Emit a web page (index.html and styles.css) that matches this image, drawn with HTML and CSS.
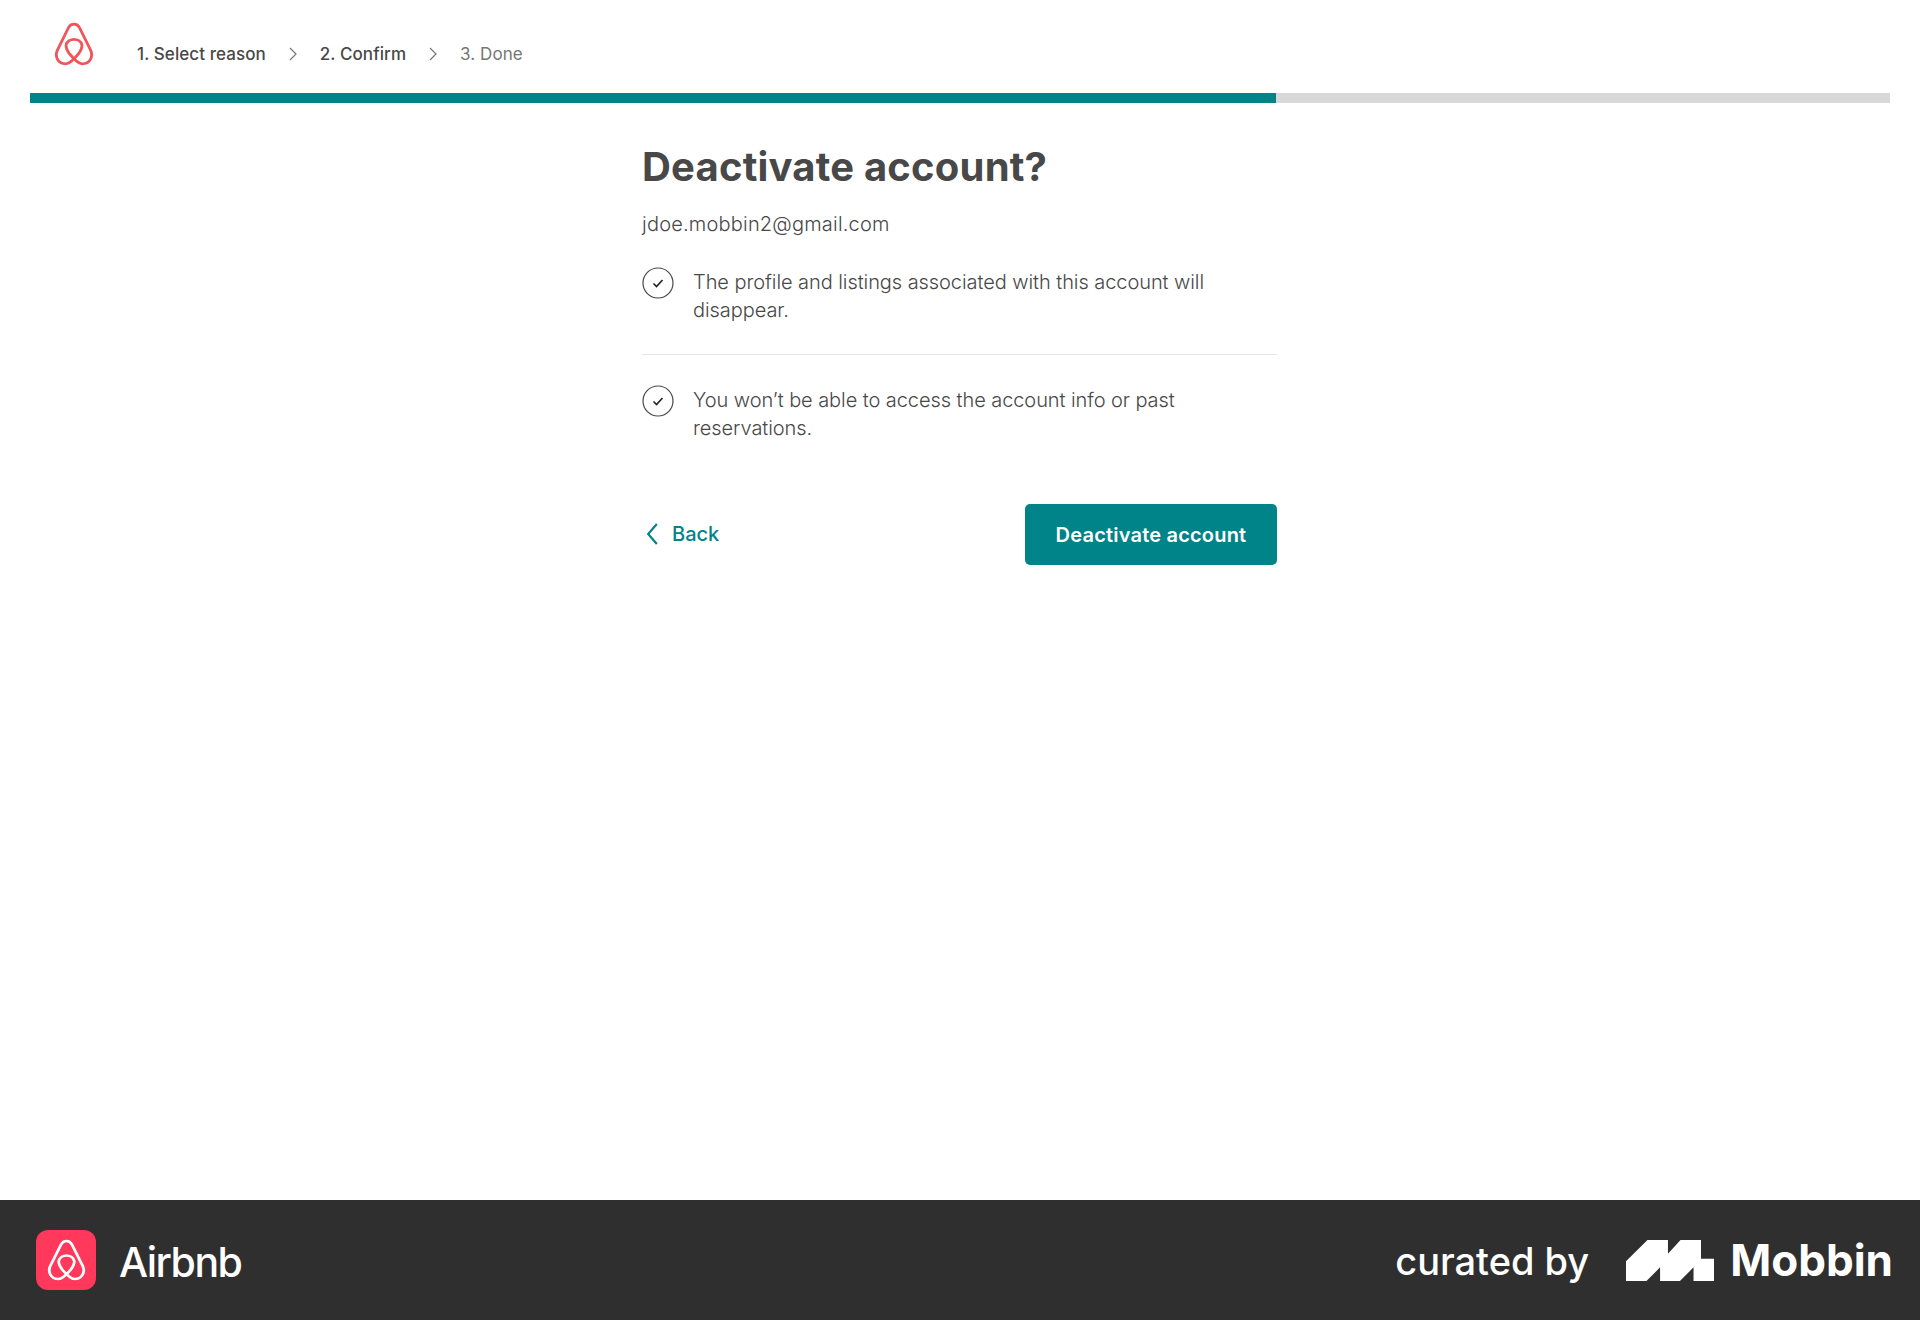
FILE: index.html
```html
<!DOCTYPE html>
<html lang="en">
<head>
<meta charset="utf-8">
<title>Deactivate account</title>
<link rel="stylesheet" href="styles.css">
</head>
<body>
<div class="page">
  <header class="top">
    <svg class="logo" viewBox="0 0 36 42" preserveAspectRatio="none"><path class="belo belo-red" d="M18 2C15.5 2 14 3.4 13 5.5L3 27C.5 33 3.500 40 10.500 40C14 40 17 37 22 30.500C25 26 25.500 23.500 25 21.500C24.200 18.500 21 16.500 18 16.500C15 16.500 11.800 18.500 11 21.500C10.500 23.500 11 26 14 30.500C19 37 22 40 25.500 40C32.500 40 35.500 33 33 27L23 5.500C22 3.400 20.500 2 18 2Z"/></svg>
    <nav class="steps">
      <span class="step">1. Select reason</span>
      <svg class="chev" viewBox="0 0 10 14"><path d="M2 1l6 6-6 6"/></svg>
      <span class="step">2. Confirm</span>
      <svg class="chev" viewBox="0 0 10 14"><path d="M2 1l6 6-6 6"/></svg>
      <span class="step step-off">3. Done</span>
    </nav>
  </header>
  <div class="progress"><div class="progress-fill"></div></div>
  <main class="main">
    <h1 class="title">Deactivate account?</h1>
    <p class="email">jdoe.mobbin2@gmail.com</p>
    <div class="item">
      <svg class="tick" viewBox="0 0 32 32"><circle cx="16" cy="16" r="15"/><path d="M11.500 16.500l3 3 6-6.500"/></svg>
      <p class="item-text">The profile and listings associated with this account will disappear.</p>
    </div>
    <hr class="rule">
    <div class="item">
      <svg class="tick" viewBox="0 0 32 32"><circle cx="16" cy="16" r="15"/><path d="M11.500 16.500l3 3 6-6.500"/></svg>
      <p class="item-text">You won’t be able to access the account info or past reservations.</p>
    </div>
    <div class="actions">
      <a class="back"><svg class="back-icon" viewBox="0 0 12 20" preserveAspectRatio="none"><path d="M10 1L2 10l8 9"/></svg>Back</a>
      <button class="primary">Deactivate account</button>
    </div>
  </main>
  <footer class="foot">
    <div class="brand">
      <span class="app-icon"><svg class="logo-small" viewBox="0 0 36 42" preserveAspectRatio="none"><path class="belo belo-white" d="M18 2C15.5 2 14 3.4 13 5.5L3 27C.5 33 3.500 40 10.500 40C14 40 17 37 22 30.500C25 26 25.500 23.500 25 21.500C24.200 18.500 21 16.500 18 16.500C15 16.500 11.800 18.500 11 21.500C10.500 23.500 11 26 14 30.500C19 37 22 40 25.500 40C32.500 40 35.500 33 33 27L23 5.500C22 3.400 20.500 2 18 2Z"/></svg></span>
      <span class="brand-name">Airbnb</span>
    </div>
    <div class="credit">
      <span class="curated">curated by</span>
      <svg class="mobbin-mark" viewBox="0 0 86 40" preserveAspectRatio="none"><path d="M0 20.700L21 0H41V13.300L53.300 0H73.300V18.300H86V40H66V26.700L52.700 40H33.300V26.700L20 40H0Z"/></svg>
      <span class="mobbin">Mobbin</span>
    </div>
  </footer>
</div>
</body>
</html>
```
FILE: styles.css
```css
* { box-sizing: border-box; }
html, body { margin: 0; padding: 0; }
body { background: #fff; font-family: "Inter", "Liberation Sans", sans-serif; color: #484848; }
.page { width: 1920px; height: 1320px; display: flex; flex-direction: column; }

.top { height: 93px; padding: 22px 0 0 54px; display: flex; align-items: flex-start; }
.logo { width: 40px; height: 44px; display: block; }
.logo-small { width: 39px; height: 42px; display: block; }
.belo { fill: none; stroke-width: 2.6; stroke-linejoin: round; }
.belo-red { stroke: #f0555c; }
.belo-white { stroke: #fff; }
.steps { margin: 21px 0 0 43px; display: flex; align-items: center; font-size: 17px; line-height: 22px; font-weight: 500; letter-spacing: 0.07px; color: #484848; }
.step-off { font-weight: 400; color: #767676; }
.chev { width: 10px; height: 14px; margin: 0 22px 0 22px; fill: none; stroke: #767676; stroke-width: 1.2; }

.progress { height: 10px; margin: 0 30px; background: #d8d8d8; }
.progress-fill { width: 1246px; height: 100%; background: #008489; }

.main { flex: 1; width: 635px; margin-left: 642px; }
.title { margin: 0; padding-top: 40px; font-size: 40px; line-height: 48px; font-weight: 700; letter-spacing: 0.2px; color: #484848; }
.email { margin: 19px 0 0; font-size: 20px; line-height: 28px; font-weight: 350; letter-spacing: 0.2px; }
.item { display: flex; gap: 19px; margin-top: 30px; }
.tick { flex: none; width: 32px; height: 32px; margin-top: -1px; fill: none; stroke: #484848; stroke-width: 1.2; }
.tick path { stroke-width: 1.6; stroke: #222; }
.item-text { margin: 0; font-size: 20px; line-height: 28px; font-weight: 350; letter-spacing: -0.07px; width: 540px; }
.rule { margin: 30px 0 0; border: 0; height: 1px; background: #e4e4e4; }
.rule + .item { margin-top: 31px; }

.actions { display: flex; justify-content: space-between; align-items: center; margin-top: 62px; }
.back { display: flex; align-items: center; gap: 13px; padding: 0 0 2px 4px; font-size: 20px; font-weight: 500; color: #008489; }
.back-icon { width: 13px; height: 22px; fill: none; stroke: #008489; stroke-width: 2; }
.primary { width: 252px; height: 61px; border: 0; border-radius: 5px; background: #008489; color: #fff; font: 600 20px "Inter", "Liberation Sans", sans-serif; letter-spacing: 0.2px; }

.foot { height: 120px; background: #2f2f2f; padding: 0 27px 0 36px; display: flex; justify-content: space-between; align-items: center; color: #fff; }
.brand { display: flex; align-items: center; gap: 23px; }
.app-icon { width: 60px; height: 60px; border-radius: 12px; background: #ff385c; display: flex; align-items: center; justify-content: center; }
.brand-name { margin-top: 4px; font-size: 41px; font-weight: 500; letter-spacing: -1.500px; }
.credit { display: flex; align-items: center; }
.curated { margin-top: 2px; font-size: 38px; font-weight: 500; }
.mobbin-mark { width: 88px; height: 41px; margin: 0 16px 0 37px; fill: #fff; }
.mobbin { font-size: 44px; font-weight: 700; }
```
